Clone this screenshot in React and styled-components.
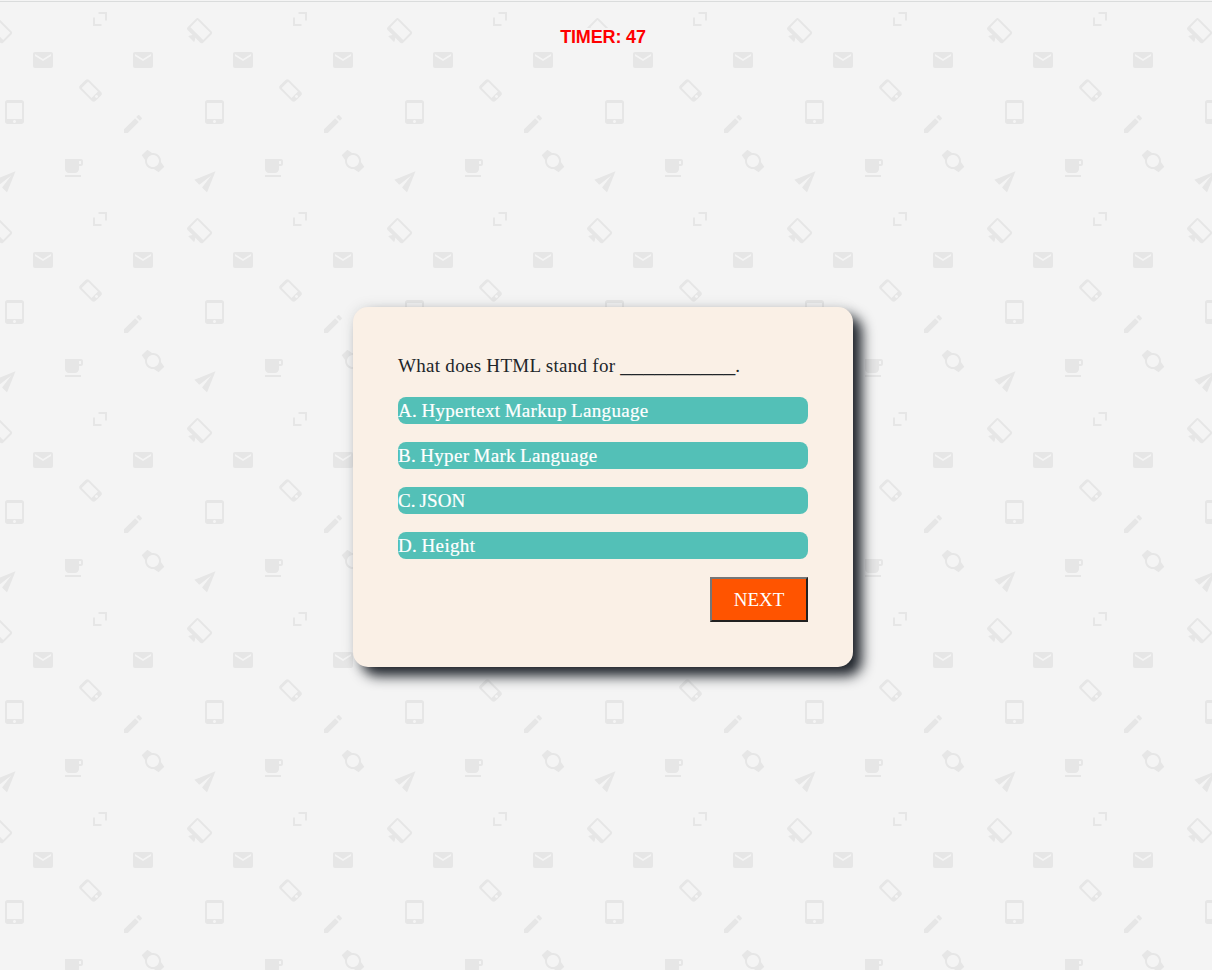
import React, { useId } from 'react';
import styled, { createGlobalStyle } from 'styled-components';

const GlobalStyle = createGlobalStyle`
  * { box-sizing: border-box; }
  html, body { margin: 0; height: 100%; overflow: hidden; }
  body { background: #f4f4f4; }
`;

const Page = styled.main`
  position: relative;
  height: 970px;
  display: flex;
  flex-direction: column;
  align-items: center;
  padding: 28px 6px 0 0;
`;

const Backdrop = styled.svg`
  position: absolute;
  inset: 0;
  z-index: -1;
  width: 100%;
  height: 100%;
`;

const Timer = styled.h1`
  margin: 0;
  height: 18px;
  font: bold 18px/18px 'Liberation Sans', Arial, sans-serif;
  letter-spacing: -0.15px;
  color: #ff0000;
  background: #f4f4f4;
  white-space: nowrap;
`;

const Card = styled.section`
  width: 500px;
  height: 360px;
  margin-top: 261px;
  padding: 45px;
  display: flex;
  flex-direction: column;
  gap: 18px;
  border-radius: 15px;
  background: #faf0e6;
  box-shadow: 9px 9px 13px #1f242b, 0 0 14px rgba(31, 36, 43, 0.1);
  font: 19px/27px 'Liberation Serif', Georgia, serif;
`;

const Question = styled.p`
  margin: 0;
  height: 27px;
  color: #212529;
  white-space: nowrap;
  letter-spacing: 0.29px;
`;

const Blank = styled.span`
  font-size: 23px;
  line-height: 0;
  vertical-align: 0.5px;
  letter-spacing: 0;
`;

const Options = styled.ul`
  display: flex;
  flex-direction: column;
  gap: 18px;
  margin: 0;
  padding: 0;
  list-style: none;
`;

const Option = styled.li`
  height: 27px;
  border-radius: 8px;
  background: #53c0b7;
  color: #fff;
  cursor: pointer;
  letter-spacing: ${({ $tracking }) => $tracking};
  word-spacing: -0.8px;
  -webkit-text-stroke: 0.2px #fff;
`;

const NextButton = styled.button`
  align-self: flex-end;
  width: 98px;
  height: 45px;
  padding: 0;
  border: 2px solid;
  border-color: #767676 #212121 #212121 #767676;
  background: #ff5400;
  color: #fff;
  font: inherit;
  cursor: pointer;
`;

const paths = {
  mail: 'M20 4H4c-1.1 0-1.99.9-1.99 2L2 18c0 1.1.9 2 2 2h16c1.1 0 2-.9 2-2V6c0-1.1-.9-2-2-2zm0 4l-8 5-8-5V6l8 5 8-5v2z',
  tablet: 'M18.5 0h-14C3.12 0 2 1.12 2 2.5v19C2 22.88 3.12 24 4.5 24h14c1.38 0 2.5-1.12 2.5-2.5v-19C21 1.12 19.88 0 18.5 0zm-7 23c-.83 0-1.5-.67-1.5-1.5s.67-1.5 1.5-1.5 1.5.67 1.5 1.5-.67 1.5-1.5 1.5zm7.5-4H4V3h15v16z',
  cup: 'M20 3H4v10c0 2.21 1.79 4 4 4h6c2.21 0 4-1.79 4-4v-3h2c1.11 0 2-.89 2-2V5c0-1.11-.89-2-2-2zm0 5h-2V5h2v3zM4 19h16v2H4z',
  phone: 'M15.5 1h-8C6.12 1 5 2.12 5 3.5v17C5 21.88 6.12 23 7.5 23h8c1.38 0 2.5-1.12 2.5-2.5v-17C18 2.12 16.88 1 15.5 1zm-4 21c-.83 0-1.5-.67-1.5-1.5s.67-1.5 1.5-1.5 1.5.67 1.5 1.5-.67 1.5-1.5 1.5zm4.5-4H7V4h9v14z',
  monitor: 'M21 2H3c-1.1 0-2 .9-2 2v12c0 1.1.9 2 2 2h7l-2 3v1h8v-1l-2-3h7c1.1 0 2-.9 2-2V4c0-1.1-.9-2-2-2zm0 12H3V4h18v10z',
  pencil: 'M3 17.25V21h3.75L17.81 9.94l-3.75-3.75L3 17.25zM20.71 7.04c.39-.39.39-1.02 0-1.41l-2.34-2.34c-.39-.39-1.02-.39-1.41 0l-1.83 1.83 3.75 3.75 1.83-1.83z',
  watch: 'M20 12c0-2.54-1.19-4.81-3.04-6.27L16 0H8l-.95 5.73C5.19 7.19 4 9.45 4 12s1.19 4.81 3.05 6.27L8 24h8l.96-5.73C18.81 16.81 20 14.54 20 12zM6 12c0-3.31 2.69-6 6-6s6 2.69 6 6-2.69 6-6 6-6-2.69-6-6z',
  plane: 'M2.01 21L23 12 2.01 3 2 10l15 2-15 2z',
  expand: 'M98.5 12H107v8.500h-2V14h-6.500zM93 17.500h2V24h6.500v2H93z',
};

const tileIcons = [
  ['mail', 'translate(31 48)'],
  ['mail', 'translate(131 48)'],
  ['tablet', 'translate(3 100)'],
  ['cup', 'translate(61 156)'],
  ['phone', 'translate(90.5 90.5) rotate(-45) translate(-11.5 -12)'],
  ['monitor', 'translate(199.6 30.7) rotate(45) translate(-12 -10)'],
  ['monitor', 'translate(-.4 30.7) rotate(45) translate(-12 -10)'],
  ['pencil', 'translate(121 112)'],
  ['watch', 'translate(153 161) rotate(-45) translate(-12 -12)'],
  ['plane', 'translate(215.5 171.3) rotate(-45) translate(-23 -12)'],
  ['plane', 'translate(15.5 171.3) rotate(-45) translate(-23 -12)'],
  ['expand', undefined],
];

function IconBackdrop() {
  const id = useId();
  return (
    <Backdrop aria-hidden="true">
      <defs>
        <pattern id={id} width="200" height="200" patternUnits="userSpaceOnUse">
          {tileIcons.map(([name, transform], i) => (
            <path key={i} d={paths[name]} transform={transform} fill="#e6e6e6" />
          ))}
        </pattern>
      </defs>
      <rect width="100%" height="100%" fill={`url(#${id})`} />
      <rect y="1" width="100%" height="1" fill="#dadcdc" />
    </Backdrop>
  );
}

const options = [
  { text: 'A. Hypertext Markup Language', tracking: '0.33px' },
  { text: 'B. Hyper Mark Language', tracking: '0.3px' },
  { text: 'C. JSON', tracking: '0.07px' },
  { text: 'D. Height', tracking: '0.36px' },
];

export default function App() {
  return (
    <>
      <GlobalStyle />
      <Page>
        <IconBackdrop />
        <Timer>TIMER: 47</Timer>
        <Card>
          <Question>
            What does HTML stand for <Blank>__________</Blank>.
          </Question>
          <Options>
            {options.map(({ text, tracking }) => (
              <Option key={text} $tracking={tracking}>{text}</Option>
            ))}
          </Options>
          <NextButton type="button">NEXT</NextButton>
        </Card>
      </Page>
    </>
  );
}
